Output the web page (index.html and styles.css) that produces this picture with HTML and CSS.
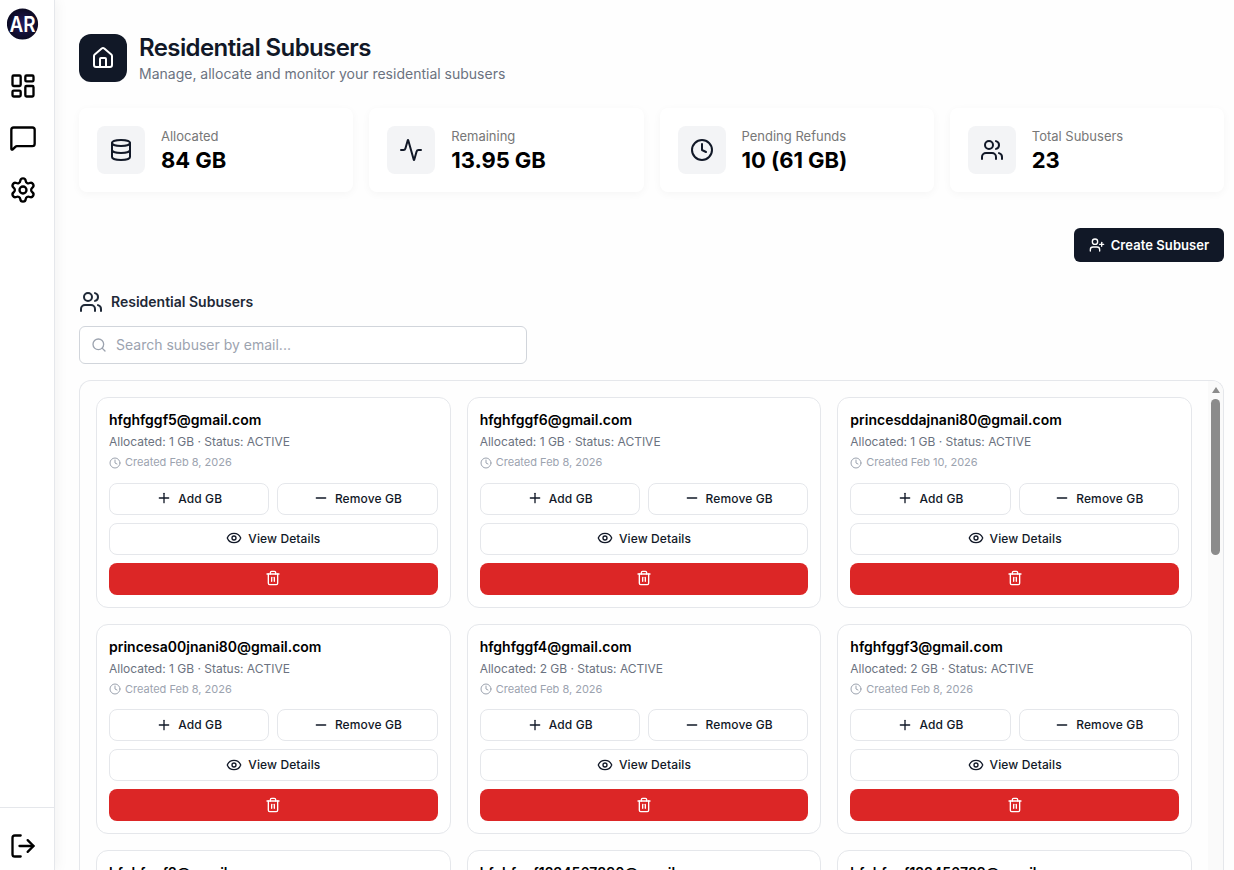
FILE: index.html
```html
<!DOCTYPE html>
<html lang="en">
<head>
  <meta charset="UTF-8" />
  <meta name="viewport" content="width=device-width, initial-scale=1" />
  <title>Residential Subusers</title>
  <link rel="stylesheet" href="styles.css">
</head>
<body>

  <svg class="sprite" aria-hidden="true">
    <symbol id="i-dashboard" viewBox="0 0 24 24"><rect x="3" y="3" width="7" height="9" rx="1"/><rect x="14" y="3" width="7" height="5" rx="1"/><rect x="14" y="12" width="7" height="9" rx="1"/><rect x="3" y="16" width="7" height="5" rx="1"/></symbol>
    <symbol id="i-message" viewBox="0 0 24 24"><path d="M22 17a2 2 0 0 1-2 2H6.828a2 2 0 0 0-1.414.586l-2.202 2.202A.71.71 0 0 1 2 21.286V5a2 2 0 0 1 2-2h16a2 2 0 0 1 2 2z"/></symbol>
    <symbol id="i-settings" viewBox="0 0 24 24"><path d="M9.671 4.136a2.34 2.34 0 0 1 4.659 0 2.34 2.34 0 0 0 3.319 1.915 2.34 2.34 0 0 1 2.33 4.033 2.34 2.34 0 0 0 0 3.831 2.34 2.34 0 0 1-2.33 4.033 2.34 2.34 0 0 0-3.319 1.915 2.34 2.34 0 0 1-4.659 0 2.34 2.34 0 0 0-3.32-1.915 2.34 2.34 0 0 1-2.33-4.033 2.34 2.34 0 0 0 0-3.831A2.34 2.34 0 0 1 6.35 6.051a2.34 2.34 0 0 0 3.319-1.915"/><circle cx="12" cy="12" r="3"/></symbol>
    <symbol id="i-logout" viewBox="0 0 24 24"><path d="M10 3H5a2 2 0 0 0-2 2v14a2 2 0 0 0 2 2h5"/><path d="M9 12h12"/><path d="m16 7 5 5-5 5"/></symbol>
    <symbol id="i-home" viewBox="0 0 24 24"><path d="M15 21v-8a1 1 0 0 0-1-1h-4a1 1 0 0 0-1 1v8"/><path d="M3 10a2 2 0 0 1 .709-1.528l7-6a2 2 0 0 1 2.582 0l7 6A2 2 0 0 1 21 10v9a2 2 0 0 1-2 2H5a2 2 0 0 1-2-2z"/></symbol>
    <symbol id="i-database" viewBox="0 0 24 24"><ellipse cx="12" cy="5" rx="9" ry="3"/><path d="M3 5v14a9 3 0 0 0 18 0V5"/><path d="M3 12a9 3 0 0 0 18 0"/></symbol>
    <symbol id="i-activity" viewBox="0 0 24 24"><path d="M22 12h-2.480a2 2 0 0 0-1.930 1.460l-2.350 8.360a.25.25 0 0 1-.480 0L9.240 2.180a.25.25 0 0 0-.480 0l-2.350 8.360A2 2 0 0 1 4.490 12H2"/></symbol>
    <symbol id="i-clock" viewBox="0 0 24 24"><circle cx="12" cy="12" r="10"/><path d="M12 6v6l4 2"/></symbol>
    <symbol id="i-users" viewBox="0 0 24 24"><path d="M16 21v-2a4 4 0 0 0-4-4H6a4 4 0 0 0-4 4v2"/><circle cx="9" cy="7" r="4"/><path d="M22 21v-2a4 4 0 0 0-3-3.870"/><path d="M16 3.130a4 4 0 0 1 0 7.750"/></symbol>
    <symbol id="i-user-plus" viewBox="0 0 24 24"><path d="M16 21v-2a4 4 0 0 0-4-4H6a4 4 0 0 0-4 4v2"/><circle cx="9" cy="7" r="4"/><path d="M19 8v6"/><path d="M22 11h-6"/></symbol>
    <symbol id="i-search" viewBox="0 0 24 24"><circle cx="11" cy="11" r="8"/><path d="m21 21-4.300-4.300"/></symbol>
    <symbol id="i-plus" viewBox="0 0 24 24"><path d="M5 12h14"/><path d="M12 5v14"/></symbol>
    <symbol id="i-minus" viewBox="0 0 24 24"><path d="M5 12h14"/></symbol>
    <symbol id="i-eye" viewBox="0 0 24 24"><path d="M2.062 12.348a1 1 0 0 1 0-.696 10.750 10.750 0 0 1 19.876 0 1 1 0 0 1 0 .696 10.750 10.750 0 0 1-19.876 0"/><circle cx="12" cy="12" r="3"/></symbol>
    <symbol id="i-trash" viewBox="0 0 24 24"><path d="M3 6h18"/><path d="M19 6v14c0 1-1 2-2 2H7c-1 0-2-1-2-2V6"/><path d="M8 6V4c0-1 1-2 2-2h4c1 0 2 1 2 2v2"/><path d="M10 11v6"/><path d="M14 11v6"/></symbol>
  </svg>

  <aside class="sidebar">
    <svg class="logo" viewBox="0 0 32 32">
      <defs>
        <radialGradient id="logoBg"><stop offset="0" stop-color="#241a5c"/><stop offset="1" stop-color="#0b0a22"/></radialGradient>
      </defs>
      <circle cx="15.500" cy="16" r="15.600" fill="url(#logoBg)"/>
      <text x="2.500" y="23.500" textLength="26" lengthAdjust="spacingAndGlyphs">AR</text>
    </svg>
    <nav class="nav">
      <a href="#"><svg class="icon"><use href="#i-dashboard"/></svg></a>
      <a href="#"><svg class="icon"><use href="#i-message"/></svg></a>
      <a href="#"><svg class="icon"><use href="#i-settings"/></svg></a>
    </nav>
    <div class="logout">
      <svg class="icon"><use href="#i-logout"/></svg>
    </div>
  </aside>

  <main class="main">
    <header class="page-header">
      <div class="header-icon"><svg class="icon"><use href="#i-home"/></svg></div>
      <div>
        <h1>Residential Subusers</h1>
        <p class="subtitle">Manage, allocate and monitor your residential subusers</p>
      </div>
    </header>

    <section class="stats">
      <div class="stat">
        <div class="stat-icon"><svg class="icon"><use href="#i-database"/></svg></div>
        <div><div class="stat-label">Allocated</div><div class="stat-value">84 GB</div></div>
      </div>
      <div class="stat">
        <div class="stat-icon"><svg class="icon"><use href="#i-activity"/></svg></div>
        <div><div class="stat-label">Remaining</div><div class="stat-value">13.95 GB</div></div>
      </div>
      <div class="stat">
        <div class="stat-icon"><svg class="icon"><use href="#i-clock"/></svg></div>
        <div><div class="stat-label">Pending Refunds</div><div class="stat-value">10 (61 GB)</div></div>
      </div>
      <div class="stat">
        <div class="stat-icon"><svg class="icon"><use href="#i-users"/></svg></div>
        <div><div class="stat-label">Total Subusers</div><div class="stat-value">23</div></div>
      </div>
    </section>

    <div class="actions">
      <button class="create-btn"><svg class="icon"><use href="#i-user-plus"/></svg>Create Subuser</button>
    </div>

    <h2 class="section-title"><svg class="icon"><use href="#i-users"/></svg><span>Residential Subusers</span></h2>

    <div class="search">
      <svg class="icon"><use href="#i-search"/></svg>
      <input type="text" placeholder="Search subuser by email..." />
    </div>

    <div class="list">
      <div class="grid" id="subusers"></div>
      <div class="scrollbar">
        <div class="scroll-arrow"></div>
        <div class="scroll-thumb"></div>
      </div>
    </div>
  </main>

<script>
  const subusers = [
    { email: "hfghfggf5@gmail.com", gb: 1, created: "Feb 8, 2026" },
    { email: "hfghfggf6@gmail.com", gb: 1, created: "Feb 8, 2026" },
    { email: "princesddajnani80@gmail.com", gb: 1, created: "Feb 10, 2026" },
    { email: "princesa00jnani80@gmail.com", gb: 1, created: "Feb 8, 2026" },
    { email: "hfghfggf4@gmail.com", gb: 2, created: "Feb 8, 2026" },
    { email: "hfghfggf3@gmail.com", gb: 2, created: "Feb 8, 2026" },
    { email: "hfghfggf2@gmail.com", gb: 1, created: "Feb 8, 2026" },
    { email: "hfghfggf1234567890@gmail.com", gb: 1, created: "Feb 8, 2026" },
    { email: "hfghfggf123456789@gmail.com", gb: 1, created: "Feb 8, 2026" }
  ];

  const icon = (name) => `<svg class="icon"><use href="#i-${name}"/></svg>`;

  document.getElementById("subusers").innerHTML = subusers.map((u) => `
    <div class="card">
      <div class="email">${u.email}</div>
      <div class="meta">Allocated: ${u.gb} GB · Status: ACTIVE</div>
      <div class="created">${icon("clock")}Created ${u.created}</div>
      <div class="buttons">
        <button class="btn">${icon("plus")}Add GB</button>
        <button class="btn">${icon("minus")}Remove GB</button>
        <button class="btn wide">${icon("eye")}View Details</button>
        <button class="btn wide danger">${icon("trash")}</button>
      </div>
    </div>`).join("");
</script>

</body>
</html>
```
FILE: styles.css
```css
* {
  margin: 0;
  padding: 0;
  box-sizing: border-box;
  font-family: Inter, sans-serif;
}

body {
  display: flex;
  height: 100vh;
  overflow: hidden;
  background-color: #fefefe;
  color: #000;
}

.sprite {
  display: none;
}

.icon {
  display: block;
  flex-shrink: 0;
  width: 16px;
  height: 16px;
  fill: none;
  stroke: currentColor;
  stroke-width: 2;
  stroke-linecap: round;
  stroke-linejoin: round;
}

/* sidebar */
.sidebar {
  display: flex;
  flex-direction: column;
  width: 55px;
  flex-shrink: 0;
  padding-top: 8px;
  background-color: #fff;
  border-right: 1px solid #e5e7eb;
  box-shadow: 2px 0 12px rgba(0, 0, 0, 0.05);
}

.logo {
  width: 32px;
  height: 32px;
  margin-left: 7px;
}

.logo text {
  fill: #fff;
  font-size: 22px;
  font-weight: 600;
}

.nav {
  display: flex;
  flex-direction: column;
  gap: 24px;
  margin-top: 32px;
  padding-left: 9px;
}

.nav a {
  color: #000;
}

.nav .icon,
.logout .icon {
  width: 28px;
  height: 28px;
}

.logout {
  margin-top: auto;
  height: 63px;
  padding: 24px 0 0 9px;
  border-top: 1px solid #e5e7eb;
}

/* main column */
.main {
  display: flex;
  flex-direction: column;
  flex: 1;
  min-width: 0;
  padding: 34px 10px 0 24px;
}

.page-header {
  display: flex;
  align-items: center;
  gap: 12px;
  height: 48px;
}

.header-icon {
  display: flex;
  align-items: center;
  justify-content: center;
  width: 48px;
  height: 48px;
  border-radius: 12px;
  background-color: #111827;
  color: #fff;
}

.header-icon .icon {
  width: 24px;
  height: 24px;
}

h1 {
  font-size: 24px;
  font-weight: 600;
  line-height: 29px;
  letter-spacing: -0.025em;
  color: #111827;
}

.subtitle {
  margin-top: 2px;
  font-size: 14px;
  line-height: 20px;
  color: #6b7280;
}

.stats {
  display: grid;
  grid-template-columns: repeat(4, 1fr);
  gap: 16px;
  margin-top: 26px;
}

.stat {
  display: flex;
  align-items: center;
  gap: 16px;
  height: 84px;
  padding: 18px;
  border-radius: 8px;
  background-color: #fff;
  box-shadow: 0 2px 8px rgba(0, 0, 0, 0.04);
}

.stat-icon {
  display: flex;
  align-items: center;
  justify-content: center;
  width: 48px;
  height: 48px;
  border-radius: 8px;
  background-color: #f3f4f6;
  color: #111827;
}

.stat-icon .icon {
  width: 24px;
  height: 24px;
}

.stat-label {
  font-size: 13px;
  line-height: 20px;
  color: #777;
}

.stat-value {
  font-size: 22px;
  font-weight: 700;
  line-height: 28px;
  letter-spacing: -0.002em;
}

.actions {
  display: flex;
  justify-content: flex-end;
  margin-top: 36px;
}

.create-btn {
  display: flex;
  align-items: center;
  justify-content: center;
  gap: 6px;
  width: 150px;
  height: 34px;
  border: none;
  border-radius: 6px;
  background-color: #111827;
  color: #fff;
  font-size: 13px;
  font-weight: 600;
  letter-spacing: 0.005em;
}

.section-title {
  display: flex;
  align-items: center;
  gap: 8px;
  height: 24px;
  margin-top: 28px;
  font-size: 14px;
  font-weight: 600;
  color: #1f2937;
}

.section-title span {
  padding-bottom: 1px;
}

.section-title .icon {
  width: 24px;
  height: 24px;
}

.search {
  display: flex;
  align-items: center;
  gap: 9px;
  width: 448px;
  height: 38px;
  margin-top: 12px;
  padding: 0 11px;
  border: 1px solid #d1d5db;
  border-radius: 6px;
  background-color: #fff;
  color: #9ca3af;
}

.search input {
  flex: 1;
  padding-bottom: 1px;
  border: none;
  outline: none;
  background: none;
  font-size: 14px;
}

.search input::placeholder {
  color: #9ca3af;
}

/* subuser list */
.list {
  display: flex;
  flex: 1;
  min-height: 0;
  margin-top: 16px;
  border: 1px solid #e5e7eb;
  border-bottom: none;
  border-radius: 12px 12px 0 0;
  overflow: hidden;
}

.grid {
  display: grid;
  grid-template-columns: repeat(3, 1fr);
  gap: 16px;
  align-content: start;
  flex: 1;
  padding: 16px;
}

.card {
  height: 210.5px;
  padding: 12px;
  border: 1px solid #e5e7eb;
  border-radius: 12px;
  background-color: #fff;
}

.email {
  font-size: 14px;
  font-weight: 600;
  line-height: 19.5px;
}

.meta {
  margin-top: 2.5px;
  font-size: 12px;
  line-height: 20px;
  color: #6b7280;
}

.created {
  display: flex;
  align-items: center;
  gap: 4px;
  margin-top: 2px;
  font-size: 11px;
  line-height: 17px;
  color: #9ca3af;
}

.created .icon {
  width: 12px;
  height: 12px;
}

.buttons {
  display: grid;
  grid-template-columns: 1fr 1fr;
  gap: 8px;
  margin-top: 11.7px;
}

.btn {
  display: flex;
  align-items: center;
  justify-content: center;
  gap: 6px;
  height: 32px;
  padding-bottom: 0.4px;
  border: 1px solid #e5e7eb;
  border-radius: 8px;
  background-color: #fff;
  color: #111827;
  font-size: 12px;
  font-weight: 500;
  letter-spacing: 0.01em;
}

.wide {
  grid-column: span 2;
}

.danger {
  border: none;
  background-color: #dc2626;
  color: #fff;
}

.scrollbar {
  display: flex;
  flex-direction: column;
  align-items: center;
  width: 15px;
  padding-top: 6px;
  background-color: #fafafa;
}

.scroll-arrow {
  border-left: 4.5px solid transparent;
  border-right: 4.5px solid transparent;
  border-bottom: 6px solid #8b8b8b;
}

.scroll-thumb {
  width: 9px;
  height: 156px;
  margin-top: 6px;
  border-radius: 5px;
  background-color: #8b8b8b;
}
```
